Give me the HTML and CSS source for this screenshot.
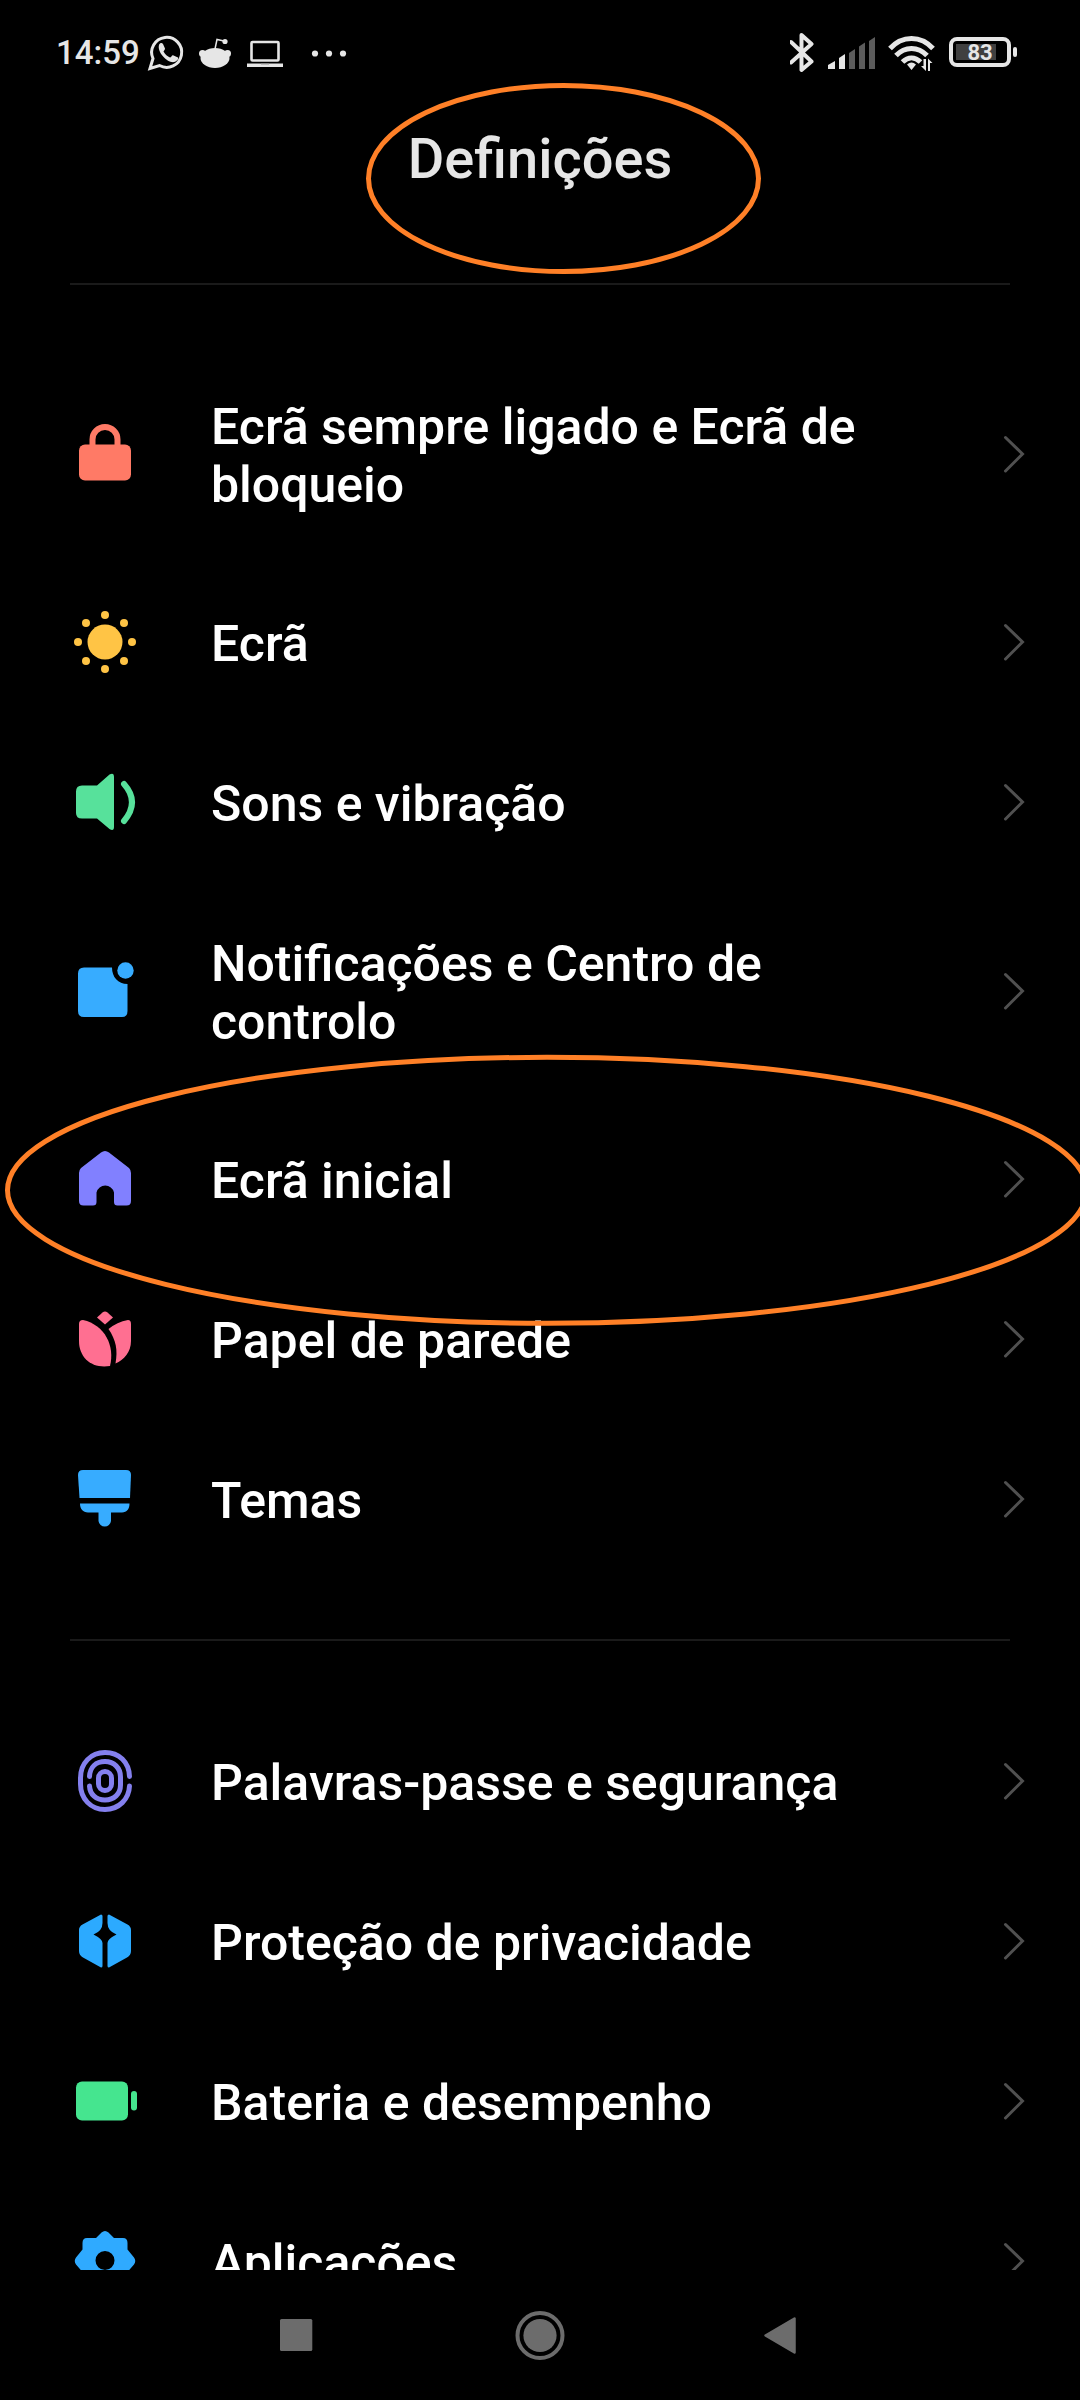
FILE: index.html
```html
<!DOCTYPE html>
<html lang="pt">
<head>
<meta charset="utf-8">
<title>Definições</title>
<link rel="stylesheet" href="styles.css">
</head>
<body>
<svg class="defs" width="0" height="0" aria-hidden="true">
  <symbol id="chevron" viewBox="0 0 24 40"><path d="M3.500 3.500 20.500 20 3.500 37" fill="none" stroke="#505050" stroke-width="3" stroke-linecap="round"/></symbol>
</svg>
<div class="screen">
  <header class="status">
    <span class="clock">14:59</span>
    <svg class="notifications" width="210" height="50" viewBox="0 0 210 50">
      <path d="M5 43.500 8 33.500A15 15 0 1 1 14.500 40.500Z" fill="none" stroke="#e6e6e6" stroke-width="3"/>
      <path d="M14 20c1-2.500 3-2.500 4-1l2 4.500c.3 1-1.500 2.500-1.500 3 1.500 3 4 5 6.500 6 1 0 2-2.500 3-2.300l5 2.400c1 1-1 4-4 4.500C22 38 12 27 14 20Z" fill="#e6e6e6"/>
      <g fill="#e6e6e6">
        <ellipse cx="70" cy="33" rx="14.500" ry="10"/><circle cx="57.500" cy="28.500" r="3.500"/><circle cx="82.500" cy="28.500" r="3.500"/><circle cx="80" cy="16.500" r="2.600"/>
        <path d="M70 24 72 14.500 79 16" fill="none" stroke="#e6e6e6" stroke-width="1.500"/>
        <path d="M102 38.500h36v3.500h-36z"/>
        <circle cx="170" cy="28.500" r="3.100"/><circle cx="184" cy="28.500" r="3.100"/><circle cx="198" cy="28.500" r="3.100"/>
      </g>
      <rect x="106.500" y="17" width="27" height="18.500" rx="1" fill="none" stroke="#e6e6e6" stroke-width="2.600"/>
      <path d="M116 39h8" stroke="#999" stroke-width="1"/>
    </svg>
    <svg class="signals" width="175" height="50" viewBox="0 0 175 50">
      <path d="M2 17 22.500 36.500 12.500 45V10L22.500 19 2 37.500" transform="translate(-1 -1)" fill="none" stroke="#e6e6e6" stroke-width="4" stroke-linejoin="round" stroke-linecap="round"/>
      <g fill="#e6e6e6"><path d="M38 43v-4l7-4v8zM49 43V32l6-4v15z"/></g>
      <g fill="#5c5c5c"><path d="M59 43V27l6-4v20zM69 43V20.500l6-4V43zM79 43V15l6-4v32z"/></g>
      <g fill="none" stroke="#e6e6e6" stroke-width="5">
        <path d="M100 22.500C112 9 131 9 143 22.500M106 29.500C115 20 128 20 137 29.500M112.500 36C118 30.500 125 30.500 130.500 36"/>
      </g>
      <path d="M117 38.500q4.500-4 9 0l-4.500 5.500zM136 33v12l-5-5h2.500v-7zM138 45V32.500l4.500 4.500H140v8z" fill="#e6e6e6"/>
    </svg>
    <div class="battery"><span class="battery-level">83</span></div>
    <i class="battery-tip"></i>
  </header>
  <h1 class="title">Definições</h1>
  <main class="list">
    <section class="group">
      <div class="row"><svg class="icon" viewBox="0 0 70 70"><g transform="translate(0 -1)"><rect x="9" y="26.500" width="52" height="36" rx="6" fill="#ff7a66"/><path d="M22.500 28V21.500a12.500 12.500 0 0 1 25 0V28" fill="none" stroke="#ff7a66" stroke-width="6"/></g></svg><span class="label">Ecrã sempre ligado e Ecrã de bloqueio</span><svg class="chevron"><use href="#chevron"/></svg></div>
      <div class="row"><svg class="icon" viewBox="0 0 70 70"><g fill="#ffc445"><circle cx="35" cy="35" r="17.500"/><circle cx="35" cy="8" r="4"/><circle cx="35" cy="62" r="4"/><circle cx="8" cy="35" r="4"/><circle cx="62" cy="35" r="4"/><circle cx="16" cy="16" r="4"/><circle cx="54" cy="16" r="4"/><circle cx="16" cy="54" r="4"/><circle cx="54" cy="54" r="4"/></g></svg><span class="label">Ecrã</span><svg class="chevron"><use href="#chevron"/></svg></div>
      <div class="row"><svg class="icon" viewBox="0 0 70 70"><path d="M12 18.500H27L39.500 7.500Q44 5 44 10V60Q44 64.500 39.500 62L27 51.500H12Q6 51.500 6 46V24.500Q6 18.500 12 18.500Z" fill="#57e19b"/><path d="M54 17Q70 35 54 54" fill="none" stroke="#57e19b" stroke-width="6" stroke-linecap="round"/></svg><span class="label">Sons e vibração</span><svg class="chevron"><use href="#chevron"/></svg></div>
      <div class="row"><svg class="icon" viewBox="0 0 70 70"><g fill="#37acff" transform="translate(0 -1)"><path d="M14 12.500H42C42 22 48 29 57.500 29V56Q57.500 62 52 62H14Q8 62 8 56V18.500Q8 12.500 14 12.500Z"/><circle cx="55.500" cy="15.500" r="8.200"/></g></svg><span class="label">Notificações e Centro de controlo</span><svg class="chevron"><use href="#chevron"/></svg></div>
      <div class="row"><svg class="icon" viewBox="0 0 70 70"><path d="M31 8.500Q35 5.500 39 8.500L59 24Q61 26 61 29V57Q61 61.500 56.500 61.500H47.500Q44 61.500 44 58V48.500A9 9 0 0 0 26.500 48.500V58Q26.500 61.500 23 61.500H13.500Q9 61.500 9 57V29Q9 26 11 24Z" fill="#8180ff"/></svg><span class="label">Ecrã inicial</span><svg class="chevron"><use href="#chevron"/></svg></div>
      <div class="row"><svg class="icon" viewBox="0 0 70 70"><g fill="#ff6f91" transform="translate(0 2)"><path d="M32.500 6.500Q35 4.500 37.500 6.500L43 11.500 35 18.500 27 11.500Z"/><path d="M13 14Q9 14 9 18V35C9 52 22 63 40 60C45 40 35 19 13 14Z"/><path d="M58 14Q61 14 61 18V35C61 46 54 54 45.500 57.500C48 44 46 34 38.500 23Q47 16 58 14Z"/></g></svg><span class="label">Papel de parede</span><svg class="chevron"><use href="#chevron"/></svg></div>
      <div class="row"><svg class="icon" viewBox="0 0 70 70"><g fill="#37acff" transform="translate(0 2)"><path d="M13 4H56Q61 4 61 9L60 32H9.500L8 9Q8 4 13 4Z"/><path d="M10 37.500H59.500C59.500 43 57 46.500 52 46.500H41V55A6.300 6.300 0 0 1 28.500 55V46.500H18C13 46.500 10 43 10 37.500Z"/></g></svg><span class="label">Temas</span><svg class="chevron"><use href="#chevron"/></svg></div>
    </section>
    <section class="group">
      <div class="row"><svg class="icon" viewBox="0 0 70 70"><g fill="none" stroke="#8480ee" stroke-width="5" stroke-linecap="round"><path d="M59.500 30.500C59 16 49 6.500 35 6.500S10.500 17 10.500 32V38C10.500 53 21 63.500 35 63.500S59 53 59.500 40"/><path d="M19.500 30.500C20 21 26 15.500 35 15.500S50.500 22 50.500 31V39C50.500 48 44 54 35 54S20 48.500 19.500 40"/><rect x="28.500" y="25.500" width="13" height="19" rx="6.500"/></g></svg><span class="label">Palavras-passe e segurança</span><svg class="chevron"><use href="#chevron"/></svg></div>
      <div class="row"><svg class="icon" viewBox="0 0 70 70"><g fill="#2caaff"><path id="shield-half" d="M31 8.500Q32.500 8.500 32.500 10V17Q32.500 25 23.500 28.500Q32.500 33 32.500 37V60Q32.500 61.500 31 61.500L13 51.500Q9 49 9 45V24Q9 20.500 12.500 18.500Z"/><use href="#shield-half" transform="translate(70) scale(-1 1)"/></g></svg><span class="label">Proteção de privacidade</span><svg class="chevron"><use href="#chevron"/></svg></div>
      <div class="row"><svg class="icon" viewBox="0 0 70 70"><g fill="#45e58f"><rect x="6" y="15.500" width="52" height="39" rx="6"/><rect x="61" y="25" width="6" height="19.500" rx="3"/></g></svg><span class="label">Bateria e desempenho</span><svg class="chevron"><use href="#chevron"/></svg></div>
      <div class="row"><svg class="icon" viewBox="0 0 70 70"><path fill-rule="evenodd" d="M31.500 6.500Q35 3.500 38.500 6.500L44 12H53Q57.500 12 57.500 17V23.500L64 31.500Q66.500 35 64 38.500L57.500 46V53Q57.500 58 53 58H44L38.500 63.500Q35 66.500 31.500 63.500L26 58H17Q12.500 58 12.500 53V46L6 38.500Q3.500 35 6 31.500L12.500 23.500V17Q12.500 12 17 12H26ZM35 25A9.500 9.500 0 1 0 35 44A9.500 9.500 0 1 0 35 25Z" fill="#2faaff"/></svg><span class="label">Aplicações</span><svg class="chevron"><use href="#chevron"/></svg></div>
    </section>
  </main>
  <nav class="navbar">
    <svg width="34" height="60" viewBox="0 0 34 60"><rect x="1" y="14" width="32.300" height="32" rx="1.500" fill="#6c6c6c"/></svg>
    <svg class="home-button" width="50" height="60" viewBox="0 0 50 60"><circle cx="25" cy="30.500" r="22.500" fill="none" stroke="#6c6c6c" stroke-width="4"/><circle cx="25" cy="30.500" r="16.600" fill="#6c6c6c"/></svg>
    <svg width="34" height="60" viewBox="0 0 34 60"><path d="M2.500 30.500 31.500 13.500V47.500Z" fill="#6c6c6c" stroke="#6c6c6c" stroke-width="2.500" stroke-linejoin="round"/></svg>
  </nav>
  <svg class="markup" width="1080" height="2400" viewBox="0 0 1080 2400" fill="none" stroke="#ff8027" stroke-width="5">
    <ellipse cx="563.500" cy="178.500" rx="195" ry="93"/>
    <ellipse cx="547" cy="1190.300" rx="539.500" ry="133"/>
  </svg>
</div>
</body>
</html>
```
FILE: styles.css
```css
* { box-sizing: border-box; }

body {
  margin: 0;
  background: #000;
  color: #fff;
  font-family: Roboto, sans-serif;
  font-weight: 500;
}

.defs { position: absolute; }

.screen {
  position: relative;
  display: flex;
  flex-direction: column;
  width: 1080px;
  height: 2400px;
  overflow: hidden;
}

.status {
  display: flex;
  align-items: center;
  height: 106px;
  padding: 0 0 4px 56px;
  color: #e6e6e6;
}

.clock {
  width: 89px;
  font-size: 33px;
  line-height: 40px;
  padding-top: 4px;
  white-space: nowrap;
}

.notifications { flex: none; margin-top: -2px; }

.signals { margin: -1px 0 0 435px; flex: none; }

.battery {
  display: flex;
  align-items: center;
  width: 62px;
  height: 30px;
  margin: 2px 0 0 -16px;
  padding: 0 3px;
  border: 4px solid #e6e6e6;
  border-radius: 8px;
}

.battery-level {
  width: 40px;
  height: 16px;
  padding-left: 8px;
  background: #404040;
  font-size: 22px;
  font-weight: 700;
  line-height: 18px;
  text-align: center;
}

.battery-tip {
  width: 4px;
  height: 10px;
  margin: 2px 0 0 2px;
  border-radius: 2px;
  background: #e6e6e6;
}

.title {
  height: 177px;
  margin: 0;
  padding-top: 20px;
  color: #e6e6e6;
  font-size: 56px;
  font-weight: 500;
  line-height: 66px;
  text-align: center;
}

.list { height: 1987px; overflow: hidden; }

.group { padding-bottom: 61px; }

.group::before {
  content: "";
  display: block;
  height: 2px;
  margin: 0 70px 59px;
  background: #1a1a1a;
}

.row {
  display: flex;
  align-items: center;
  min-height: 160px;
  padding: 51px 54px 51px 70px;
}

.icon { width: 70px; height: 70px; margin: -5px 0 -7px; flex: none; }

.label {
  width: 700px;
  margin: 4px auto -4px 71px;
  font-size: 50px;
  line-height: 57.5px;
}

.chevron { width: 24px; height: 40px; margin: 1px 0 -1px; flex: none; }

.navbar {
  display: flex;
  justify-content: space-between;
  align-items: center;
  height: 130px;
  padding: 0 283px 0 279px;
}

.home-button { margin-left: 4px; }

.markup { position: absolute; inset: 0; }
```
